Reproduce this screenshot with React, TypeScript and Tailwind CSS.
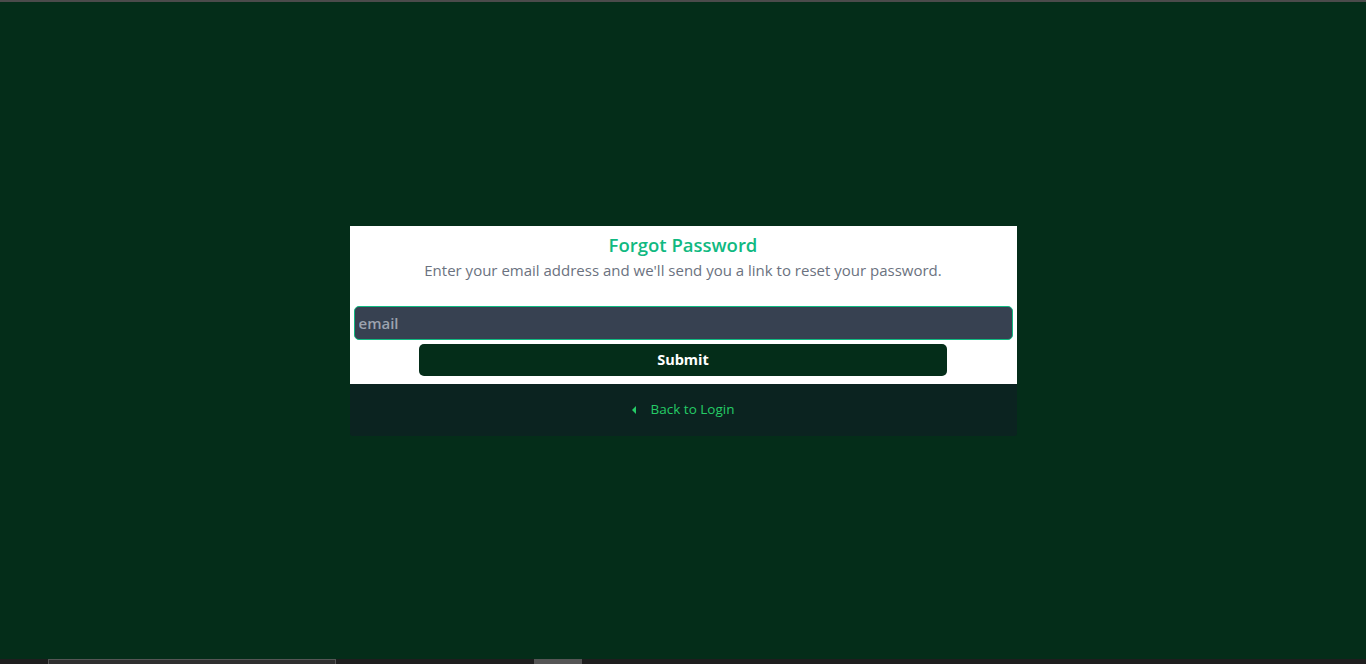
export default function App() {
  return (
    <div className="flex h-[664px] w-full flex-col bg-[#042d19] font-['Open_Sans',sans-serif]">
      <div className="h-[2px] bg-[#4b4b4b]" />
      <main className="flex flex-1 items-center justify-center">
        <div className="w-[667px] overflow-hidden rounded-b-[3px]">
          <section className="bg-white px-1 pt-[6px] pb-2">
            <h1 className="text-center text-[18.5px] leading-[26px] font-semibold text-[#10b981]">
              Forgot Password
            </h1>
            <p className="text-center text-[15px] leading-6 text-[#6b7280]">
              Enter your email address and we'll send you a link to reset your password.
            </p>
            <form className="mt-6 flex flex-col items-center gap-1">
              <input
                type="email"
                placeholder="email"
                className="h-[34px] w-full rounded-[5px] border border-[#10b981] bg-[#374151] px-1 text-[15px] font-semibold text-white placeholder:text-[#9ca3af] outline-none"
              />
              <button
                type="button"
                className="h-8 w-4/5 rounded-[5px] bg-[#042d19] text-[14.5px] font-bold text-white"
              >
                Submit
              </button>
            </form>
          </section>
          <footer className="flex h-[52px] items-center justify-center gap-[14px] bg-[#0b2320] text-[13.5px] text-[#25cc66]">
            <svg width="5" height="8" viewBox="0 0 5 8" className="fill-[#25cc66]">
              <path d="M4 0 L0 4 L4 8 Z" />
            </svg>
            <a>Back to Login</a>
          </footer>
        </div>
      </main>
      <div className="flex h-[5px] bg-[#1e1e1e]">
        <div className="ml-[48px] w-[288px] border-t border-x border-[#555] bg-[#2f2f2f]" />
        <div className="ml-[198px] w-[48px] bg-[#555]" />
      </div>
    </div>
  );
}
